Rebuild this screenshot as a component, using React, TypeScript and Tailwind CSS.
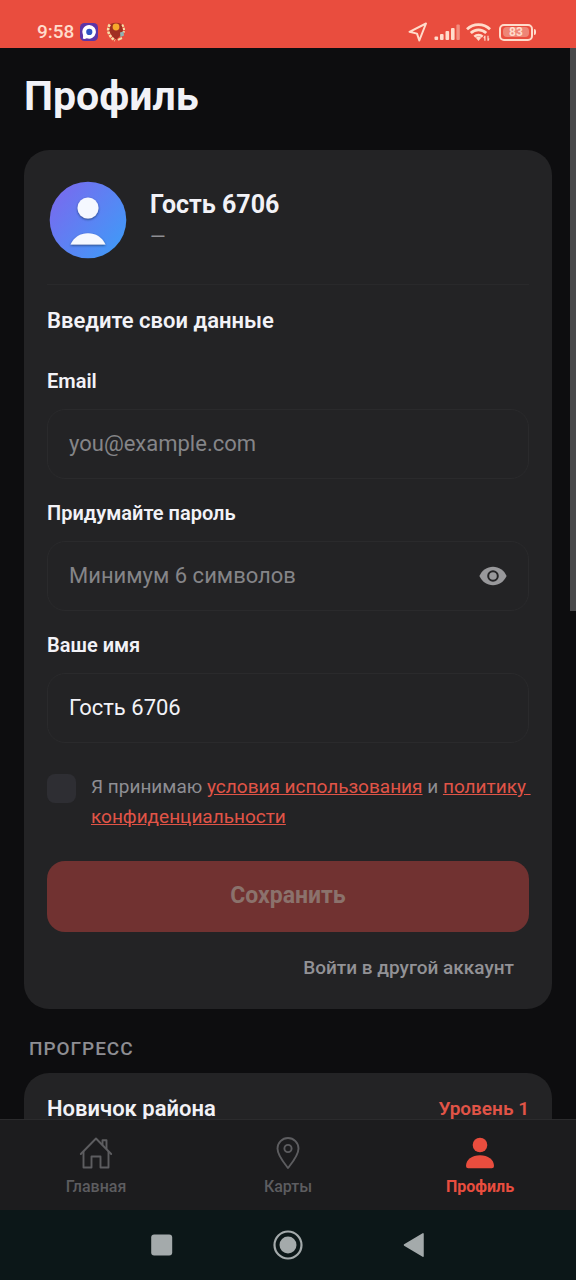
import { useState } from "react";

function StatusBar() {
  return (
    <header className="flex h-12 shrink-0 items-end justify-between bg-[#e94d3e] pr-10 pb-[6px] pl-[37px] text-[#ffdccb]">
      <div className="flex items-center">
        <span className="text-[19px] leading-5 font-medium">9:58</span>
        <svg className="ml-[6px] size-[18px]" viewBox="0 0 18 18" aria-hidden="true">
          <rect width="18" height="18" rx="4.5" fill="#5b35a8" />
          <path d="M9.300 2a6.800 6.800 0 1 1-2.500 13.200Q4.500 16.400 2.800 15.600 3.300 14 2.900 11.500A6.800 6.800 0 0 1 9.300 2z" fill="#fff" />
          <circle cx="9.3" cy="8.9" r="3.1" fill="#2f55c4" />
        </svg>
        <svg className="ml-2 size-5" viewBox="0 0 20 20" aria-hidden="true">
          <path d="M4.500 2Q10-.5 15.500 2L17 9 14 14 10 18 6 14 3 9z" fill="#a03022" />
          <circle cx="10" cy="5" r="3.4" fill="#f7a92c" />
          <path d="M3.800 2.500Q1 7 3 11.500T9 18.500" fill="none" stroke="#f5dfa8" strokeWidth="2.6" strokeDasharray="2.600 1" />
          <path d="M16.200 2.500Q19 7 17.500 10.500" fill="none" stroke="#f5dfa8" strokeWidth="2" strokeDasharray="2.400 1" />
          <path d="M14 10.500 17.500 9.500 18 13.500 14.500 15z" fill="#8fb4b4" />
          <path d="M12 17.800 16 16" fill="none" stroke="#f5dfa8" strokeWidth="2" />
        </svg>
      </div>
      <div className="flex items-center">
        <svg className="h-5 w-5" viewBox="0 0 20 20" fill="none" aria-hidden="true">
          <path d="M1.5 9.8 18 1.5 11.3 18.5 9 11.6z" stroke="currentColor" strokeWidth="2" strokeLinejoin="round" />
        </svg>
        <svg className="ml-[6px] h-5 w-[26px]" viewBox="0 0 26 20" aria-hidden="true">
          <g fill="currentColor">
            <rect x="0.5" y="14.5" width="3.6" height="3.5" rx="1" />
            <rect x="6" y="12" width="3.6" height="6" rx="1" />
            <rect x="11.5" y="9" width="3.6" height="9" rx="1" />
            <rect x="17" y="6" width="3.6" height="12" rx="1" />
            <rect x="22.4" y="2.5" width="3.4" height="15.5" rx="1" opacity="0.45" />
          </g>
        </svg>
        <svg className="ml-[6px] h-5 w-[26px]" viewBox="0 0 26 20" fill="none" aria-hidden="true">
          <g stroke="currentColor" strokeWidth="2.8">
            <path d="M1 7.2a16.5 16.5 0 0 1 23 0" />
            <path d="M4.8 11a11 11 0 0 1 15.4 0" />
            <path d="M8.400 14.800a6 6 0 0 1 8.200 0" />
          </g>
          <path d="M9.8 15.8a4 4 0 0 1 5.4 0L12.5 19z" fill="currentColor" />
          <path d="M18.9 13.8v5M22 13.8v5" stroke="currentColor" strokeWidth="1.2" />
          <path d="m17.2 16 1.700-2.200v2.800zM23.700 16.800 22 19v-2.800z" fill="currentColor" />
        </svg>
        <div className="ml-[7px] flex items-center">
          <div className="flex h-[17px] w-[34px] items-center justify-center rounded-[5px] border-2 border-current">
            <span className="flex h-[10px] w-[26px] items-center justify-center rounded-sm bg-[#ee8576] text-[12px] leading-none font-bold">
              83
            </span>
          </div>
          <span className="ml-px h-[6px] w-[2px] rounded-r bg-current" />
        </div>
      </div>
    </header>
  );
}

function Avatar() {
  return (
    <svg className="size-[78px] shrink-0" viewBox="0 0 78 78" aria-hidden="true">
      <defs>
        <linearGradient id="avatar" x1="0" y1="0.1" x2="1" y2="0.9">
          <stop offset="0" stopColor="#7b68ee" />
          <stop offset="1" stopColor="#3d9cf8" />
        </linearGradient>
        <filter id="shade" x="-20%" y="-20%" width="140%" height="150%">
          <feDropShadow dx="0" dy="1" stdDeviation="1" floodColor="#142850" floodOpacity="0.7" />
        </filter>
      </defs>
      <circle cx="39" cy="39" r="38.3" fill="url(#avatar)" />
      <g fill="#f5f8ff" filter="url(#shade)">
        <circle cx="39" cy="27" r="10.5" />
        <path d="M21.5 63.600C25 56 31.500 52.300 39 52.300S53 56 56.500 63.600z" />
      </g>
    </svg>
  );
}

const inputStyle =
  "block h-[70px] w-full rounded-[18px] border border-[#2a2a2c] bg-[#232325] px-[21px] pb-[2px] text-[22px] text-[#f2f2f7] outline-none placeholder:text-[#858588]";

function ProfileCard() {
  const [name, setName] = useState("Гость 6706");
  const [visible, setVisible] = useState(false);
  const [accepted, setAccepted] = useState(false);

  return (
    <section className="mx-6 mt-7 rounded-[25px] bg-[#232325] px-[23px] pt-[31px] pb-[27px]">
      <div className="flex gap-[23px] border-b border-[#29292b] pb-[25px] pl-[2px]">
        <Avatar />
        <div className="pt-2">
          <h2 className="text-[25px] leading-8 font-bold text-[#f2f2f7]">Гость 6706</h2>
          <p className="text-[20px] leading-8 text-[#8e8e93]">—</p>
        </div>
      </div>

      <form onSubmit={(event) => event.preventDefault()}>
        <h3 className="mt-[22px] text-[22px] leading-7 font-semibold text-[#f2f2f7]">Введите свои данные</h3>

        <label htmlFor="email" className="mt-8 block text-[20px] leading-7 font-semibold text-[#f2f2f7]">
          Email
        </label>
        <input id="email" type="email" placeholder="you@example.com" className={`mt-[14px] ${inputStyle}`} />

        <label htmlFor="password" className="mt-5 block text-[20px] leading-7 font-semibold text-[#f2f2f7]">
          Придумайте пароль
        </label>
        <div className="relative mt-[14px]">
          <input
            id="password"
            type={visible ? "text" : "password"}
            placeholder="Минимум 6 символов"
            className={inputStyle}
          />
          <button
            type="button"
            aria-label="Показать пароль"
            onClick={() => setVisible(!visible)}
            className="absolute inset-y-0 right-[22px] flex items-center"
          >
            <svg className="h-5 w-7" viewBox="0 0 28 20" aria-hidden="true">
              <path d="M.4 10C3 4.300 8 .8 14 .8S25 4.300 27.600 10C25 15.700 20 19.200 14 19.200S3 15.700.4 10z" fill="#98989b" />
              <circle cx="14" cy="10" r="4.800" fill="#98989b" stroke="#232325" strokeWidth="2" />
            </svg>
          </button>
        </div>

        <label htmlFor="name" className="mt-5 block text-[20px] leading-7 font-semibold text-[#f2f2f7]">
          Ваше имя
        </label>
        <input
          id="name"
          type="text"
          value={name}
          onChange={(event) => setName(event.target.value)}
          className={`mt-[14px] ${inputStyle}`}
        />

        <div className="mt-[29px] flex gap-[15px]">
          <input
            id="terms"
            type="checkbox"
            checked={accepted}
            onChange={(event) => setAccepted(event.target.checked)}
            className="mt-[2px] size-[29px] shrink-0 appearance-none rounded-lg bg-[#2e2e33] checked:bg-[#eb4e3d]"
          />
          <label htmlFor="terms" className="-mr-2 text-[19px] leading-[30px] text-[#8e8e93]">
            Я принимаю{" "}
            <a href="#terms" className="text-[#e15447] underline">
              условия использования
            </a>{" "}
            и{" "}
            <a href="#privacy" className="text-[#e15447] underline">
              политику{"\u00a0"}
              <br />
              конфиденциальности
            </a>
          </label>
        </div>

        <button
          type="submit"
          disabled={!accepted}
          className="mt-[29px] h-[71px] w-full rounded-[18px] bg-[#eb4e3d] text-[23px] font-bold text-white disabled:bg-[#713231] disabled:text-[#8b726c]"
        >
          Сохранить
        </button>
        <div className="mt-[22px] flex justify-end pr-[15px]">
          <button type="button" className="text-[19px] leading-7 font-medium text-[#929296]">
            Войти в другой аккаунт
          </button>
        </div>
      </form>
    </section>
  );
}

function TabBar() {
  return (
    <nav className="grid h-[91px] shrink-0 grid-cols-3 border-t border-[#2b2b2d] bg-[#1c1c1e] pt-4 text-[16px] leading-6 font-medium text-[#5d5d60]">
      <a href="#home" className="flex flex-col items-center gap-[5px]">
        <svg className="size-[34px]" viewBox="0 0 34 34" fill="none" stroke="currentColor" strokeWidth="1.900" strokeLinecap="round" strokeLinejoin="round" aria-hidden="true">
          <path d="M1.800 18 17 2.500 32.200 18" />
          <path d="M4.500 15.600V31.500H12.500V20.500H21.500V31.500H29.500V15.600" />
          <path d="M23.500 8.500V4.200H27.500V12.500" />
        </svg>
        Главная
      </a>
      <a href="#maps" className="flex flex-col items-center gap-[5px]">
        <svg className="size-[34px]" viewBox="0 0 34 34" fill="none" stroke="currentColor" strokeWidth="1.900" strokeLinejoin="round" aria-hidden="true">
          <path d="M17 32C13.500 27.500 6.500 19.500 6.500 12.500a10.500 10.500 0 0 1 21 0C27.500 19.500 20.500 27.500 17 32z" />
          <circle cx="17" cy="12.500" r="3.600" />
        </svg>
        Карты
      </a>
      <a href="#profile" className="flex flex-col items-center gap-[5px] font-bold text-[#e94d3e]" aria-current="page">
        <svg className="size-[34px]" viewBox="0 0 34 34" fill="currentColor" aria-hidden="true">
          <circle cx="17" cy="9" r="7.300" />
          <path d="M3 30C3 23.500 9 19.300 17 19.300S31 23.500 31 30Q31 32.300 28.800 32.300H5.200Q3 32.300 3 30z" />
        </svg>
        Профиль
      </a>
    </nav>
  );
}

function SystemBar() {
  return (
    <footer className="flex h-[70px] shrink-0 items-center justify-center gap-[96px] bg-[#0c1718] text-[#a4aaab]">
      <button type="button" aria-label="Недавние">
        <svg className="size-[30px]" viewBox="0 0 30 30" fill="currentColor" aria-hidden="true">
          <rect x="4.200" y="4.500" width="21" height="21" rx="3" />
        </svg>
      </button>
      <button type="button" aria-label="Домой">
        <svg className="size-[30px]" viewBox="0 0 30 30" fill="currentColor" aria-hidden="true">
          <circle cx="15" cy="15" r="13.500" fill="none" stroke="currentColor" strokeWidth="2.200" />
          <circle cx="15" cy="15" r="8.500" />
        </svg>
      </button>
      <button type="button" aria-label="Назад">
        <svg className="size-[30px]" viewBox="0 0 30 30" fill="currentColor" stroke="currentColor" strokeWidth="1.500" strokeLinejoin="round" aria-hidden="true">
          <path d="M5.500 15 24 3.800v22.400z" />
        </svg>
      </button>
    </footer>
  );
}

export default function App() {
  return (
    <div className="flex h-screen flex-col bg-[#0d0d0f] font-[Roboto,sans-serif]">
      <StatusBar />
      <main className="relative min-h-0 flex-1 overflow-hidden">
        <h1 className="pt-[22px] pl-6 text-[41px] leading-[52px] font-bold text-[#f2f2f7]">Профиль</h1>
        <ProfileCard />
        <h2 className="mt-[26px] pl-[29px] text-[19px] leading-7 font-medium tracking-wider text-[#8e8e93]">ПРОГРЕСС</h2>
        <section className="mx-6 mt-[10px] flex items-center justify-between rounded-[25px] bg-[#232325] px-[23px] pt-[22px] pb-20">
          <h3 className="text-[22px] leading-7 font-semibold text-[#f2f2f7]">Новичок района</h3>
          <span className="text-[19px] leading-7 font-semibold text-[#e15447]">Уровень 1</span>
        </section>
        <div className="absolute top-0 right-0 h-[563px] w-[6px] bg-[#48484a]" />
      </main>
      <TabBar />
      <SystemBar />
    </div>
  );
}
